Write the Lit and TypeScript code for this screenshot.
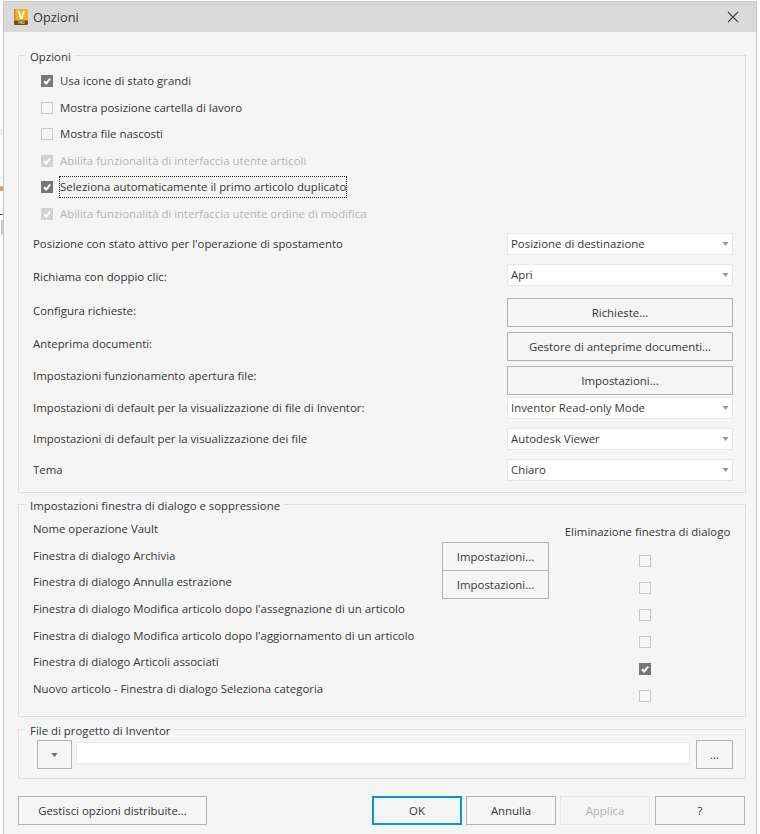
import { LitElement, html, css } from 'lit';
import { customElement } from 'lit/decorators.js';

type Check = { label: string; checked?: boolean; disabled?: boolean; focus?: boolean };

const checks: Check[] = [
    { label: 'Usa icone di stato grandi', checked: true },
    { label: 'Mostra posizione cartella di lavoro' },
    { label: 'Mostra file nascosti' },
    { label: 'Abilita funzionalità di interfaccia utente articoli', checked: true, disabled: true },
    { label: 'Seleziona automaticamente il primo articolo duplicato', checked: true, focus: true },
    { label: 'Abilita funzionalità di interfaccia utente ordine di modifica', checked: true, disabled: true },
];

const formLabels = [
    "Posizione con stato attivo per l'operazione di spostamento",
    'Richiama con doppio clic:',
    'Configura richieste:',
    'Anteprima documenti:',
    'Impostazioni funzionamento apertura file:',
    'Impostazioni di default per la visualizzazione di file di Inventor:',
    'Impostazioni di default per la visualizzazione dei file',
    'Tema',
];

const dialogLabels = [
    'Nome operazione Vault',
    'Finestra di dialogo Archivia',
    'Finestra di dialogo Annulla estrazione',
    "Finestra di dialogo Modifica articolo dopo l'assegnazione di un articolo",
    "Finestra di dialogo Modifica articolo dopo l'aggiornamento di un articolo",
    'Finestra di dialogo Articoli associati',
    'Nuovo articolo - Finestra di dialogo Seleziona categoria',
];

const suppress = [false, false, false, false, true, false];

const tick = html`<svg viewBox="0 0 12 12" width="12" height="12">
    <path d="M3 6.2 5.2 8.4 9.2 3.6" fill="none" stroke="#fff" stroke-width="2" />
</svg>`;

const arrow = html`<svg class="arrow" viewBox="0 0 8 5" width="7" height="4">
    <path d="M0 0H8L4 5Z" fill="#9a9a9a" />
</svg>`;

@customElement('app-root')
export class AppRoot extends LitElement {
    static styles = css`
        :host {
            display: flex;
            width: 760px;
            height: 834px;
            overflow: hidden;
            background: #fff;
            font-family: 'Open Sans', 'Noto Sans', sans-serif;
            font-size: 11.4px;
            color: #363636;
        }

        * {
            box-sizing: border-box;
        }

        .behind {
            display: flex;
            flex-direction: column;
            flex: none;
            width: 3px;
            padding-top: 129px;
        }

        .behind .band {
            height: 6px;
            background: #f0f0f0;
        }

        .behind .line {
            height: 1px;
            margin-top: 42px;
            background: #e6e6e6;
        }

        .behind .dot {
            height: 5px;
            margin-top: 8px;
            background: #d9a06a;
        }

        .behind .rule {
            height: 1px;
            margin-top: 23px;
            background: #555;
        }

        .behind .bar {
            height: 15px;
            margin: 5px 0 0 1px;
            background: #ccc;
        }

        .window {
            flex: none;
            width: 754px;
            height: 833px;
            margin-top: 1px;
            border: 1px solid #c9c9c9;
            border-bottom: none;
            background: #f5f5f5;
        }

        .titlebar {
            display: flex;
            align-items: center;
            height: 30px;
            padding: 0 17px 0 10px;
            background: #d9d9d9;
            font-size: 12.8px;
        }

        .titlebar .name {
            margin-left: 5px;
            flex: 1;
        }

        .content {
            padding: 15px 10px 0 14px;
        }

        fieldset {
            display: block;
            margin: 0;
            padding: 0;
            min-width: 0;
            border: 1px solid #e0e0e0;
        }

        legend {
            margin-left: 7px;
            padding: 0 4px;
            line-height: 16px;
            transform: translateY(2px);
        }

        .opzioni {
            height: 446px;
        }

        .checks {
            display: flex;
            flex-direction: column;
            padding: 4.7px 0 0 22px;
        }

        .check {
            display: flex;
            align-items: center;
            height: 26.6px;
        }

        .check.disabled {
            color: #b4b4b4;
        }

        .box {
            display: block;
            flex: none;
            width: 12px;
            height: 12px;
            border: 1px solid #c8c8c8;
            background: #f5f5f5;
        }

        .box svg {
            display: block;
            margin: -1px;
        }

        .box.on {
            border-color: #777;
            background: #777;
        }

        .box.on.off {
            border-color: #d2d2d2;
            background: #d2d2d2;
        }

        .check .text {
            margin-left: 7px;
            line-height: 20px;
        }

        .check .text.focus {
            outline: 1px dotted #222;
            outline-offset: 0;
        }

        .form {
            display: flex;
            justify-content: space-between;
            padding: 0 12px 0 14px;
        }

        .form-labels {
            display: flex;
            flex-direction: column;
            padding-top: 9px;
        }

        .form-labels div {
            line-height: 16px;
        }

        .form-labels div:nth-child(n + 2) {
            margin-top: 17px;
        }

        .form-labels div:nth-child(3) {
            margin-top: 18px;
        }

        .form-labels div:nth-child(5),
        .form-labels div:nth-child(6) {
            margin-top: 16px;
        }

        .form-labels div:nth-child(7),
        .form-labels div:nth-child(8) {
            margin-top: 15px;
        }

        .controls {
            display: flex;
            flex-direction: column;
            width: 226px;
            padding-top: 5.7px;
        }

        .select {
            display: flex;
            align-items: center;
            justify-content: space-between;
            height: 22px;
            padding: 0 3px;
            border: 1px solid #e8e8e8;
            background: #fff;
        }

        .gap-9 {
            margin-top: 9px;
        }

        .gap-12 {
            margin-top: 12px;
        }

        .gap-5 {
            margin-top: 5px;
        }

        .gap-2 {
            margin-top: 2px;
        }

        .btn {
            display: flex;
            align-items: center;
            justify-content: center;
            height: 29px;
            border: 1px solid #b4b4b4;
            background: #f5f5f5;
            white-space: nowrap;
        }

        .dialogs-set {
            height: 221px;
            margin-top: 3px;
        }

        .dialogs {
            display: flex;
        }

        .dialog-labels {
            width: 423px;
            padding: 3px 0 0 14px;
        }

        .dialog-labels div {
            display: flex;
            align-items: center;
            height: 26.7px;
        }

        .dialog-buttons {
            width: 107px;
            padding-top: 30px;
        }

        .dialog-buttons .btn {
            height: 29px;
        }

        .dialog-buttons .btn + .btn {
            height: 28px;
            border-top: none;
        }

        .dialog-checks {
            display: flex;
            flex-direction: column;
            align-items: center;
            width: 165px;
            margin-left: 16px;
            padding-top: 12px;
        }

        .dialog-checks .head {
            line-height: 16px;
            white-space: nowrap;
            margin-bottom: 7.5px;
        }

        .dialog-checks .cell {
            display: flex;
            align-items: center;
            justify-content: center;
            width: 100%;
            height: 27px;
            padding-right: 5px;
        }

        .project {
            height: 58px;
            margin-top: 4px;
        }

        .project-row {
            display: flex;
            padding: 3px 12px 0 18px;
        }

        .drop {
            width: 35px;
        }

        .drop .arrow path {
            fill: #707070;
        }

        .path {
            flex: 1;
            height: 22px;
            margin: 2px 6px 0 4px;
            border: 1px solid #e8e8e8;
            background: #fff;
        }

        .more {
            width: 37px;
        }

        .footer {
            display: flex;
            margin-top: 17px;
        }

        .footer .btn {
            flex: none;
        }

        .footer .manage {
            width: 189px;
            margin-right: 165px;
        }

        .footer .ok {
            width: 90px;
            border: 2px solid #0696d7;
        }

        .footer .cancel,
        .footer .apply {
            width: 90px;
            margin-left: 4px;
        }

        .footer .apply {
            border-color: #e6e6e6;
            color: #b4b4b4;
        }

        .footer .help {
            width: 90px;
            margin-left: 5px;
        }
    `;

    private box(checked?: boolean, disabled?: boolean) {
        const cls = `box${checked ? ' on' : ''}${disabled ? ' off' : ''}`;
        return html`<span class=${cls}>${checked ? tick : ''}</span>`;
    }

    render() {
        return html`
            <div class="behind">
                <div class="band"></div>
                <div class="line"></div>
                <div class="dot"></div>
                <div class="rule"></div>
                <div class="bar"></div>
            </div>
            <div class="window">
                <div class="titlebar">
                    <svg viewBox="0 0 14 16" width="14" height="16">
                        <rect width="14" height="16" rx="1.5" fill="#f0b323" />
                        <rect width="1.5" height="16" fill="#c9911a" />
                        <path d="M0 11.5H14V14.5a1.5 1.5 0 0 1-1.5 1.5H1.5a1.5 1.5 0 0 1-1.5-1.5Z" fill="#6b5312" />
                        <text x="7.5" y="9.5" text-anchor="middle" font-size="10.5" font-weight="700"
                            font-family="Open Sans" fill="#fff">V</text>
                        <text x="7.5" y="15" text-anchor="middle" font-size="3.2" font-weight="700"
                            font-family="Open Sans" fill="#d8cfa8">PRO</text>
                    </svg>
                    <span class="name">Opzioni</span>
                    <svg viewBox="0 0 12 12" width="12" height="12">
                        <path d="M1 1 11 11M11 1 1 11" stroke="#444" stroke-width="1.1" fill="none" />
                    </svg>
                </div>
                <div class="content">
                    <fieldset class="opzioni">
                        <legend>Opzioni</legend>
                        <div class="checks">
                            ${checks.map(
                                (c) => html`
                                    <div class="check ${c.disabled ? 'disabled' : ''}">
                                        ${this.box(c.checked, c.disabled)}
                                        <span class="text ${c.focus ? 'focus' : ''}">${c.label}</span>
                                    </div>
                                `,
                            )}
                        </div>
                        <div class="form">
                            <div class="form-labels">
                                ${formLabels.map((l) => html`<div>${l}</div>`)}
                            </div>
                            <div class="controls">
                                <div class="select">Posizione di destinazione ${arrow}</div>
                                <div class="select gap-9">Apri ${arrow}</div>
                                <div class="btn gap-12">Richieste...</div>
                                <div class="btn gap-5">Gestore di anteprime documenti...</div>
                                <div class="btn gap-5">Impostazioni...</div>
                                <div class="select gap-2">Inventor Read-only Mode ${arrow}</div>
                                <div class="select gap-9">Autodesk Viewer ${arrow}</div>
                                <div class="select gap-9">Chiaro ${arrow}</div>
                            </div>
                        </div>
                    </fieldset>

                    <fieldset class="dialogs-set">
                        <legend>Impostazioni finestra di dialogo e soppressione</legend>
                        <div class="dialogs">
                            <div class="dialog-labels">
                                ${dialogLabels.map((l) => html`<div>${l}</div>`)}
                            </div>
                            <div class="dialog-buttons">
                                <div class="btn">Impostazioni...</div>
                                <div class="btn">Impostazioni...</div>
                            </div>
                            <div class="dialog-checks">
                                <div class="head">Eliminazione finestra di dialogo</div>
                                ${suppress.map((s) => html`<div class="cell">${this.box(s)}</div>`)}
                            </div>
                        </div>
                    </fieldset>

                    <fieldset class="project">
                        <legend>File di progetto di Inventor</legend>
                        <div class="project-row">
                            <div class="btn drop">${arrow}</div>
                            <div class="path"></div>
                            <div class="btn more">...</div>
                        </div>
                    </fieldset>

                    <div class="footer">
                        <div class="btn manage">Gestisci opzioni distribuite...</div>
                        <div class="btn ok">OK</div>
                        <div class="btn cancel">Annulla</div>
                        <div class="btn apply">Applica</div>
                        <div class="btn help">?</div>
                    </div>
                </div>
            </div>
        `;
    }
}
